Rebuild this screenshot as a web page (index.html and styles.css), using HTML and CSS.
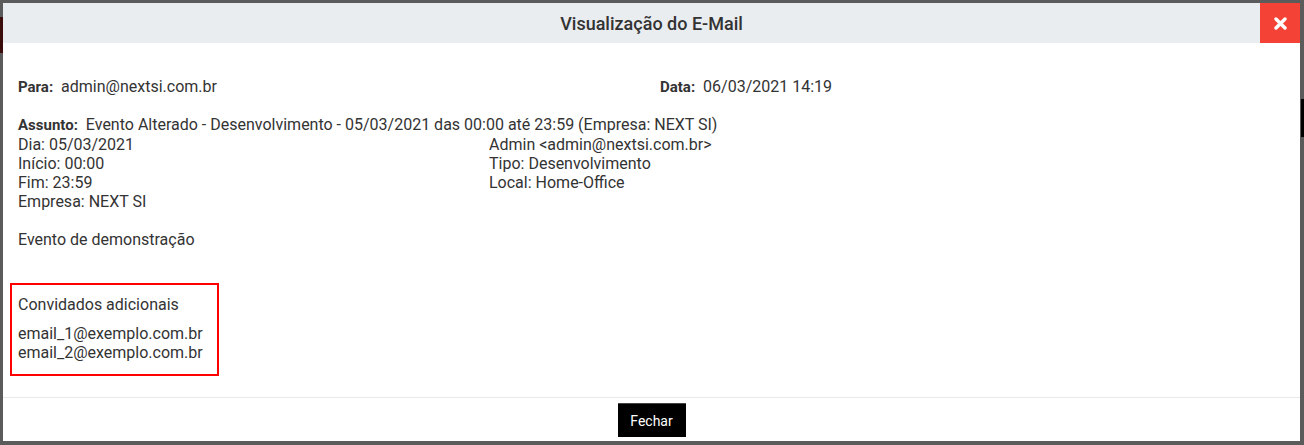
FILE: index.html
```html
<!DOCTYPE html>
<html lang="pt-BR">
<head>
<meta charset="utf-8">
<title>Visualização do E-Mail</title>
<link rel="stylesheet" href="styles.css">
</head>
<body>
<div class="backdrop-strip strip-red"></div>
<div class="backdrop-strip strip-black"></div>
<div class="modal">
  <div class="modal-header">
    <h4 class="modal-title">Visualização do E-Mail</h4>
    <button class="close-btn" aria-label="Fechar">
      <svg width="13" height="13" viewBox="0 0 13 13"><path d="M2 2 L11 11 M11 2 L2 11" stroke="#fff" stroke-width="3.4" stroke-linecap="round"/></svg>
    </button>
  </div>
  <div class="modal-body">
    <div class="meta-row">
      <div class="meta"><span class="meta-label">Para:</span> admin@nextsi.com.br</div>
      <div class="meta"><span class="meta-label">Data:</span> 06/03/2021 14:19</div>
    </div>
    <div class="meta subject"><span class="meta-label">Assunto:</span> Evento Alterado - Desenvolvimento - 05/03/2021 das 00:00 até 23:59 (Empresa: NEXT SI)</div>
    <div class="mail">
      <div class="mail-cols">
        <div class="mail-col">
          <div>Dia: 05/03/2021</div>
          <div>Início: 00:00</div>
          <div>Fim: 23:59</div>
          <div>Empresa: NEXT SI</div>
        </div>
        <div class="mail-col">
          <div>Admin &lt;admin@nextsi.com.br&gt;</div>
          <div>Tipo: Desenvolvimento</div>
          <div>Local: Home-Office</div>
        </div>
      </div>
      <p class="description">Evento de demonstração</p>
      <div class="guests">
        <p class="guests-title">Convidados adicionais</p>
        <div>email_1@exemplo.com.br</div>
        <div>email_2@exemplo.com.br</div>
      </div>
    </div>
  </div>
  <div class="modal-footer">
    <button class="btn-close">Fechar</button>
  </div>
</div>
</body>
</html>
```
FILE: styles.css
```css
html, body {
  margin: 0;
  padding: 0;
}
body {
  background: #5b5b5b;
  height: 445px;
  overflow: hidden;
  font-family: Roboto, "Liberation Sans", Arial, sans-serif;
  color: #333;
  position: relative;
}
.backdrop-strip {
  position: absolute;
}
.strip-red {
  left: 0;
  top: 17px;
  width: 3px;
  height: 36px;
  background: #3a0c0c;
}
.strip-black {
  right: 0;
  top: 99px;
  width: 3px;
  height: 38px;
  background: #000;
}
.modal {
  position: relative;
  margin: 3px 0 0 3px;
  width: 1297px;
  height: 438px;
  background: #fff;
  display: flex;
  flex-direction: column;
}
.modal-header {
  height: 40px;
  background: #e9edf0;
  display: flex;
  align-items: center;
  justify-content: center;
  position: relative;
}
.modal-title {
  margin: 0;
  font-size: 18px;
  font-weight: 500;
  color: #333;
}
.close-btn {
  position: absolute;
  right: 0;
  top: 0;
  width: 40px;
  height: 40px;
  border: 0;
  padding: 0;
  background: #f44336;
  display: flex;
  align-items: center;
  justify-content: center;
}
.modal-body {
  flex: 1;
  padding: 34px 15px 0 15px;
  font-size: 16px;
}
.meta-row {
  display: grid;
  grid-template-columns: 642px 1fr;
}
.meta {
  line-height: 20px;
}
.meta-label {
  font-weight: bold;
  font-size: 15px;
  margin-right: 4px;
}
.subject {
  margin-top: 18px;
  line-height: 19px;
}
.mail {
  line-height: 19px;
}
.mail-cols {
  display: grid;
  grid-template-columns: 471px 1fr;
}
.description {
  margin: 19px 0 0 0;
}
.guests {
  margin: 34px 0 0 -8px;
  width: 193px;
  border: 2px solid #f00;
  padding: 10px 6px 12px 6px;
}
.guests-title {
  margin: 0 0 10px 0;
}
.modal-footer {
  border-top: 1px solid #e9e9e9;
  height: 44px;
  box-sizing: border-box;
  display: flex;
  justify-content: center;
  padding-top: 5px;
}
.btn-close {
  width: 68px;
  height: 34px;
  background: #000;
  color: #fff;
  border: 0;
  border-top: 1px solid #444;
  font-family: Roboto, "Liberation Sans", Arial, sans-serif;
  font-size: 14px;
  padding: 0;
}
```
